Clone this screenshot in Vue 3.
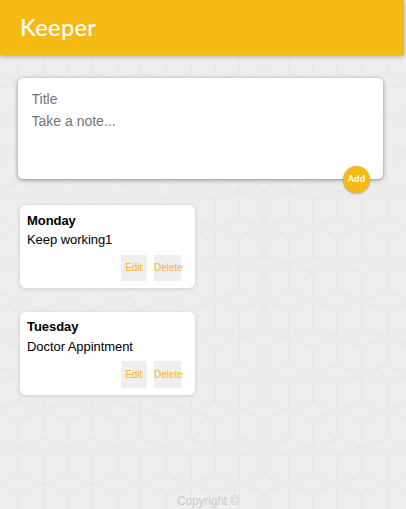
<script setup>
import { ref } from 'vue'

const draft = ref({ title: '', content: '' })
const notes = ref([
  { id: 1, title: 'Monday', content: 'Keep working1' },
  { id: 2, title: 'Tuesday', content: 'Doctor Appintment' },
])

function addNote() {
  notes.value.push({ id: Date.now(), ...draft.value })
  draft.value = { title: '', content: '' }
}

function removeNote(id) {
  notes.value = notes.value.filter((note) => note.id !== id)
}
</script>

<template>
  <div class="page">
    <header class="header"><h1>Keeper</h1></header>
    <form class="create" @submit.prevent="addNote">
      <input v-model="draft.title" placeholder="Title" />
      <textarea v-model="draft.content" placeholder="Take a note..."></textarea>
      <button class="add">Add</button>
    </form>
    <main class="notes">
      <article v-for="note in notes" :key="note.id" class="note">
        <h2>{{ note.title }}</h2>
        <p>{{ note.content }}</p>
        <div class="actions">
          <button>Edit</button>
          <button @click="removeNote(note.id)">Delete</button>
        </div>
      </article>
    </main>
    <footer class="footer">Copyright ©</footer>
  </div>
</template>

<style>
body {
  background-color: #ededed;
  background-image: url("data:image/svg+xml,%3Csvg xmlns='http://www.w3.org/2000/svg' width='490' height='732'%3E%3Cdefs%3E%3Cpattern id='p' width='49' height='73.2' patternUnits='userSpaceOnUse'%3E%3Cpath fill='none' stroke='%23e7e7e7' stroke-width='1' d='M0 9L24.5 .3L49 9L24.5 18ZM0 36.9L49 54.6M0 54.6L49 36.9M24.5 18V73.2M0 0V36.9M0 54.6V73.2M49 0V36.9M49 54.6V73.2'/%3E%3C/pattern%3E%3C/defs%3E%3Crect width='490' height='732' fill='url(%23p)'/%3E%3C/svg%3E");
  background-size: 490px 732px;
  background-position: 19px -1px;
  overflow: hidden;
}
</style>

<style scoped>
.page {
  box-sizing: border-box;
  display: flex;
  flex-direction: column;
  height: 509px;
  padding-right: 2px;
  font-family: "Liberation Sans", Arial, sans-serif;
}
.header {
  box-sizing: border-box;
  height: 55px;
  flex: none;
  padding: 10px 20px;
  background: #f5ba13;
  box-shadow: 0 1px 5px rgba(0, 0, 0, 0.35);
}
h1 {
  margin: 0;
  color: #fff;
  font: 500 23.5px/35px Lato, sans-serif;
  letter-spacing: 0.4px;
}
.create {
  position: relative;
  box-sizing: border-box;
  display: flex;
  flex-direction: column;
  flex: none;
  width: 365.5px;
  height: 101px;
  margin: 23px 0 0 17.5px;
  padding: 10px 14px;
  background: #fff;
  border-radius: 5px;
  box-shadow: 0 1px 4px rgb(138, 137, 137);
}
.create input,
.create textarea {
  display: block;
  width: 100%;
  height: 22px;
  padding: 0;
  border: 0;
  outline: 0;
  resize: none;
  background: transparent;
  font: 14px/22px "Liberation Sans", Arial, sans-serif;
}
.create textarea {
  height: 50px;
}
.create ::placeholder {
  color: #757575;
}
.add {
  position: absolute;
  right: 13px;
  bottom: -14px;
  width: 27px;
  height: 27px;
  padding: 0 0 1px;
  border: 0;
  border-radius: 50%;
  background: #f5ba13;
  color: #fff;
  font: 600 9px/24px Inter, sans-serif;
  box-shadow: 0 1px 2px rgba(0, 0, 0, 0.3);
}
.notes {
  display: flex;
  flex-direction: column;
  align-items: flex-start;
  gap: 23.5px;
  padding: 26.4px 0 0 19.5px;
}
.note {
  box-sizing: border-box;
  width: 175.5px;
  height: 83px;
  padding: 7.5px;
  background: #fff;
  border-radius: 6px;
  box-shadow: 0 1px 4px #ccc;
}
h2,
p {
  margin: 0;
  color: #000;
  font-size: 13px;
  letter-spacing: -0.06px;
  line-height: 15px;
}
p {
  margin-top: 4.5px;
}
.actions {
  display: flex;
  justify-content: flex-end;
  gap: 7px;
  margin: 7.5px 7px 0 0;
}
.actions button {
  width: 26.5px;
  height: 26.5px;
  padding: 0;
  border: 0;
  background: #efefef;
  color: #f5ba13;
  font: 10px/26px "Liberation Sans", Arial, sans-serif;
}
.footer {
  margin-top: auto;
  padding-left: 12px;
  color: #ccc;
  font-size: 12px;
  letter-spacing: -0.15px;
  line-height: 16px;
  text-align: center;
}
</style>
